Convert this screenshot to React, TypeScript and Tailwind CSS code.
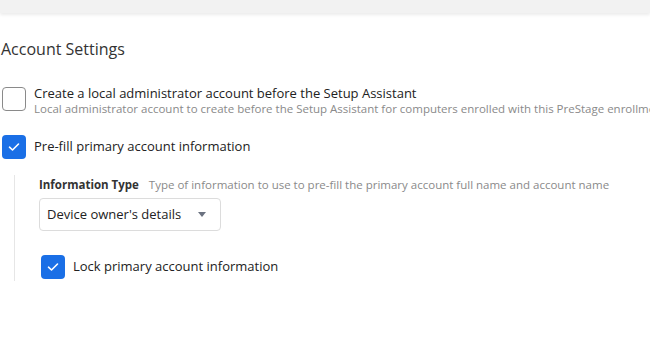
import React from "react";

const Check = ({ checked, className = "" }: { checked: boolean; className?: string }) => (
  <div
    className={
      "w-6 h-6 rounded-[4px] flex items-center justify-center shrink-0 " +
      (checked ? "bg-[#1a6fe6]" : "border border-[#8a8a8a] bg-white") +
      " " +
      className
    }
  >
    {checked && (
      <svg width="12" height="10" viewBox="0 0 12 10" fill="none">
        <path d="M1.5 5.2 L4.5 8 L10.5 2" stroke="white" strokeWidth="1.6" strokeLinecap="round" strokeLinejoin="round" />
      </svg>
    )}
  </div>
);

export default function App() {
  return (
    <div className="w-[650px] h-[347px] bg-white overflow-hidden text-[#333]" style={{ fontFamily: "'Open Sans', Lato, sans-serif" }}>
      <div className="h-[13px] bg-[#f2f2f2] shadow-[0_2px_3px_rgba(0,0,0,0.08)]" />
      <div className="pt-[26px] pl-[1px]">
        <h2 className="text-[16px] leading-[20px] text-[#333]">Account Settings</h2>
        <div className="mt-[26px] flex items-start pl-[1px]">
          <Check checked={false} className="mt-[2px]" />
          <div className="ml-[8px] whitespace-nowrap">
            <div className="text-[13px] leading-[16px] text-[#222]">Create a local administrator account before the Setup Assistant</div>
            <div className="text-[11.5px] leading-[15px] text-[#8a8a8a]">Local administrator account to create before the Setup Assistant for computers enrolled with this PreStage enrollment</div>
          </div>
        </div>
        <div className="mt-[19px] flex items-center pl-[1px]">
          <Check checked={true} />
          <div className="ml-[8px] text-[13px] text-[#222]">Pre-fill primary account information</div>
        </div>
        <div className="ml-[13px] mt-[16px] border-l border-[#e6e6e6] pl-[24px] pb-[2px] pt-[2px]">
          <div className="flex items-baseline whitespace-nowrap leading-[16px]">
            <span className="text-[11.5px] font-bold text-[#333]">Information Type</span>
            <span className="ml-[10px] text-[11.5px] text-[#8a8a8a]">Type of information to use to pre-fill the primary account full name and account name</span>
          </div>
          <div className="mt-[5px] w-[182px] h-[33px] border border-[#dcdcdc] rounded-[4px] flex items-center pl-[7px] pr-[8px] justify-between">
            <span className="text-[13px] text-[#222]">Device owner's details</span>
            <svg width="8" height="5" viewBox="0 0 8 5" className="mr-[6px]"><path d="M0 0 L8 0 L4 5 Z" fill="#6b7280" /></svg>
          </div>
          <div className="mt-[24px] flex items-center pl-[2px]">
            <Check checked={true} />
            <div className="ml-[8px] text-[13px] text-[#222]">Lock primary account information</div>
          </div>
        </div>
      </div>
    </div>
  );
}
